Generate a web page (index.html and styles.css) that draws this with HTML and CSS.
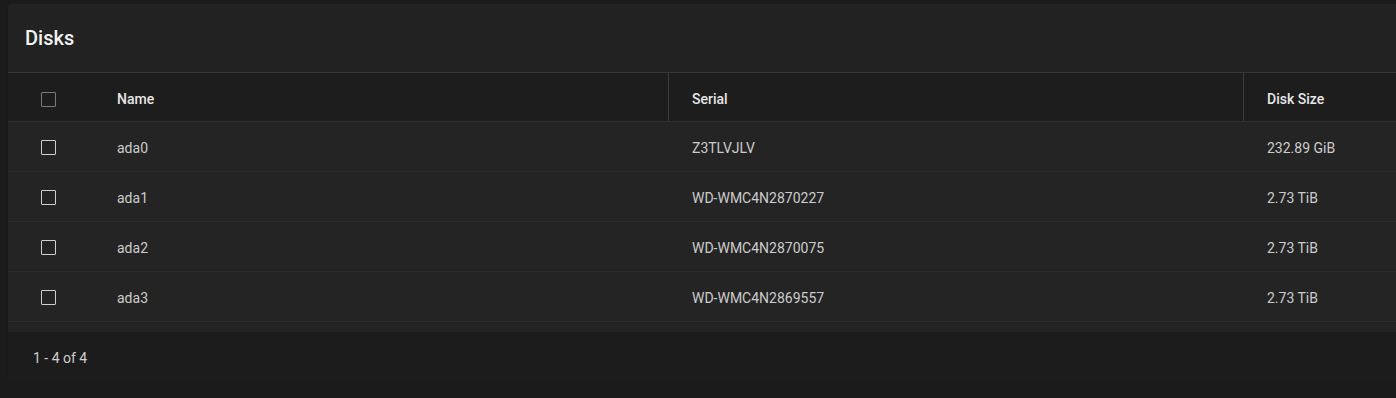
FILE: index.html
```html
<!DOCTYPE html>
<html>
<head>
<meta charset="utf-8">
<link rel="stylesheet" href="styles.css">
</head>
<body>
<div class="card">
  <div class="card-title">Disks</div>
  <div class="table">
    <div class="row head">
      <div class="cell c-check"><span class="cb"></span></div>
      <div class="cell c-name">Name</div>
      <div class="cell c-serial">Serial</div>
      <div class="cell c-size">Disk Size</div>
    </div>
    <div class="row">
      <div class="cell c-check"><span class="cb"></span></div>
      <div class="cell c-name">ada0</div>
      <div class="cell c-serial">Z3TLVJLV</div>
      <div class="cell c-size">232.89 GiB</div>
    </div>
    <div class="row">
      <div class="cell c-check"><span class="cb"></span></div>
      <div class="cell c-name">ada1</div>
      <div class="cell c-serial">WD-WMC4N2870227</div>
      <div class="cell c-size">2.73 TiB</div>
    </div>
    <div class="row">
      <div class="cell c-check"><span class="cb"></span></div>
      <div class="cell c-name">ada2</div>
      <div class="cell c-serial">WD-WMC4N2870075</div>
      <div class="cell c-size">2.73 TiB</div>
    </div>
    <div class="row">
      <div class="cell c-check"><span class="cb"></span></div>
      <div class="cell c-name">ada3</div>
      <div class="cell c-serial">WD-WMC4N2869557</div>
      <div class="cell c-size">2.73 TiB</div>
    </div>
  </div>
  <div class="spacer"></div>
  <div class="footer">1 - 4 of 4</div>
</div>
</body>
</html>
```

FILE: styles.css
```css
html, body {
  margin: 0;
  padding: 0;
  background: #1b1b1b;
  font-family: Roboto, "Liberation Sans", sans-serif;
  overflow: hidden;
}
body {
  padding: 4px 0 0 8px;
}
.card {
  background: #222222;
  border-top-left-radius: 3px;
  box-shadow: 0 1px 1px rgba(0,0,0,0.5);
  width: 1388px;
}
.card-title {
  height: 69px;
  box-sizing: border-box;
  padding: 22px 0 0 17px;
  font-size: 20px;
  font-weight: 500;
  color: #f2f2f2;
  border-bottom: 1px solid #363636;
}
.row {
  display: flex;
  height: 49px;
  align-items: stretch;
  border-bottom: 1px solid #2c2c2c;
  background: #242424;
  font-size: 14px;
  color: #cccccc;
}
.row:not(.head) .cell {
  padding-top: 2px;
}
.row.head {
  height: 48px;
  background: #1d1d1d;
  font-weight: 500;
  color: #e6e6e6;
  border-bottom: 1px solid #303030;
}
.cell {
  display: flex;
  align-items: center;
  box-sizing: border-box;
}
.c-check {
  width: 109px;
  padding-left: 33px;
}
.c-name {
  width: 551px;
}
.c-serial {
  width: 575px;
  padding-left: 24px;
}
.c-size {
  flex: 1;
  padding-left: 24px;
}
.head .cell {
  padding-top: 3px;
}
.head .c-serial, .head .c-size {
  border-left: 1px solid #3c3c3c;
  padding-left: 23px;
}
.cb {
  display: block;
  width: 13px;
  height: 13px;
  border: 1.5px solid #cfcfcf;
  border-radius: 1px;
}
.head .cb {
  border-color: #7a7a7a;
  margin-top: 2px;
}
.spacer {
  height: 10px;
  background: #242424;
}
.footer {
  height: 50px;
  background: #1c1c1c;
  display: flex;
  align-items: center;
  padding-left: 25px;
  padding-top: 1px;
  box-sizing: border-box;
  font-size: 14px;
  color: #cfcfcf;
}
```
